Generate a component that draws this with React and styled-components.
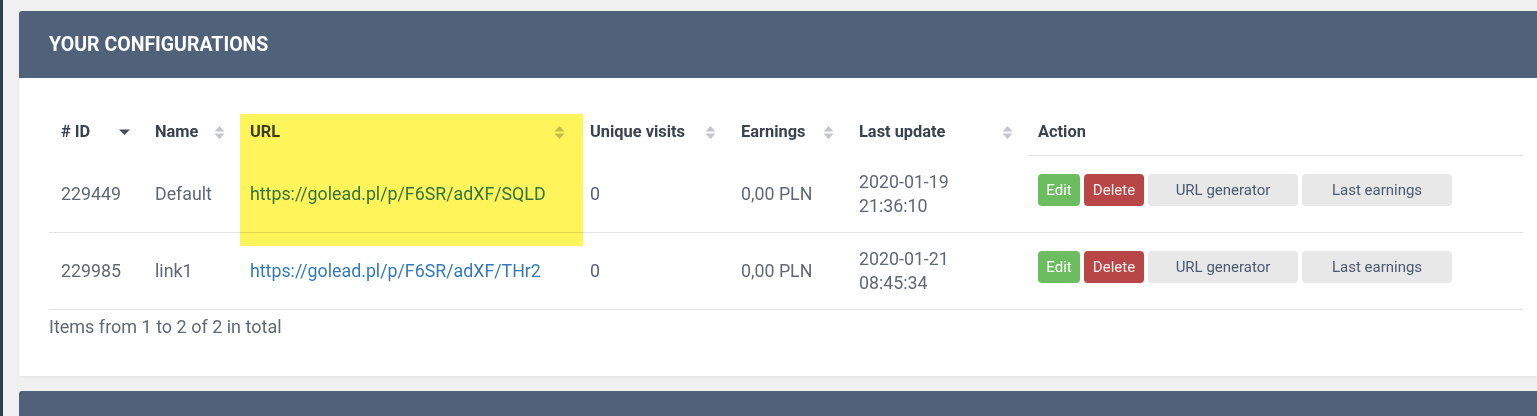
import React from "react";
import styled, { createGlobalStyle } from "styled-components";

const GlobalStyle = createGlobalStyle`
  html, body {
    margin: 0;
    padding: 0;
    background: #f0f0f0;
    font-family: Roboto, "Liberation Sans", Arial, sans-serif;
    overflow: hidden;
  }
`;

const Layout = styled.div`
  display: flex;
  height: 416px;
  overflow: hidden;
`;

const SideStrip = styled.div`
  width: 3px;
  flex-shrink: 0;
  background: #2f3f50;
`;

const Main = styled.div`
  flex: 1;
  min-width: 0;
  padding: 11px 0 0 16px;
  overflow: hidden;
`;

const Panel = styled.div`
  margin-right: -16px;
  background: #fff;
  border-radius: 3px 3px 0 0;
  box-shadow: 0 1px 3px rgba(0, 0, 0, 0.06);
`;

const PanelHead = styled.div`
  height: 67px;
  display: flex;
  align-items: center;
  padding: 0 30px;
  background: #4f6279;
  border-radius: 3px 3px 0 0;
  color: #fff;
  font-size: 19.5px;
  font-weight: 700;
  text-transform: uppercase;
`;

const PanelBody = styled.div`
  padding: 30px 30px 37px;
`;

const TableWrap = styled.div`
  position: relative;
`;

const Table = styled.table`
  width: 100%;
  border-collapse: collapse;
  table-layout: fixed;
  font-size: 17.8px;
  line-height: 24px;
`;

const Th = styled.th`
  text-align: left;
  padding: 12px 0 11px ${(p) => (p.$first ? "12px" : "10px")};
  font-size: 16.4px;
  font-weight: 700;
  color: #3a4250;
  white-space: nowrap;
  border-bottom: 1px solid ${(p) => (p.$lined ? "#e2e2e2" : "transparent")};
`;

const HeadInner = styled.div`
  display: flex;
  align-items: center;
  justify-content: space-between;
  padding-right: 15px;
`;

const Td = styled.td`
  padding: 14px 10px 14px ${(p) => (p.$first ? "12px" : "10px")};
  vertical-align: middle;
  color: ${(p) => p.$color || "#616873"};
  border-bottom: 1px solid #e2e2e2;
  white-space: nowrap;
`;

const UrlLink = styled.a`
  color: #337ab7;
  text-decoration: none;
`;

const Actions = styled.div`
  display: flex;
  gap: 4px;
  margin-bottom: 8px;
`;

const Button = styled.button`
  height: 32px;
  padding: 0;
  width: ${(p) => p.$w}px;
  border: none;
  border-radius: 4px;
  font-family: inherit;
  font-size: 15px;
  background: ${(p) => p.$bg};
  color: ${(p) => p.$fg};
  cursor: pointer;
`;

const Summary = styled.div`
  margin-top: 5px;
  font-size: 18px;
  line-height: 24px;
  color: #616873;
`;

const Highlight = styled.div`
  position: absolute;
  left: 191px;
  top: 6px;
  width: 343px;
  height: 132px;
  background: #fff45a;
  mix-blend-mode: multiply;
  pointer-events: none;
`;

const BottomRow = styled.div`
  display: flex;
  gap: 16px;
  margin-top: 15px;
  margin-right: -40px;
`;

const BottomPanel = styled.div`
  flex: ${(p) => p.$grow};
  height: 60px;
  background: #4f6279;
  border-radius: 3px 3px 0 0;
`;

const SortIcon = ({ active }) =>
  active ? (
    <svg width="11" height="12" viewBox="0 0 11 12">
      <path d="M0 3.5h11L5.5 9z" fill="#4a4f58" />
    </svg>
  ) : (
    <svg width="11" height="15" viewBox="0 0 11 15">
      <path d="M5.5 1l5 5.5h-10z" fill="#c4c6cc" />
      <path d="M5.5 14l5-5.5h-10z" fill="#c4c6cc" />
    </svg>
  );

const columns = [
  { label: "# ID", width: 96, active: true },
  { label: "Name", width: 95 },
  { label: "URL", width: 340 },
  { label: "Unique visits", width: 151 },
  { label: "Earnings", width: 118 },
  { label: "Last update", width: 179 },
  { label: "Action", noSort: true },
];

const rows = [
  {
    id: "229449",
    name: "Default",
    url: "https://golead.pl/p/F6SR/adXF/SQLD",
    visits: "0",
    earnings: "0,00 PLN",
    date: "2020-01-19",
    time: "21:36:10",
  },
  {
    id: "229985",
    name: "link1",
    url: "https://golead.pl/p/F6SR/adXF/THr2",
    visits: "0",
    earnings: "0,00 PLN",
    date: "2020-01-21",
    time: "08:45:34",
  },
];

const App = () => {
  return (
    <Layout>
      <GlobalStyle />
      <SideStrip />
      <Main>
        <Panel>
          <PanelHead>Your configurations</PanelHead>
          <PanelBody>
            <TableWrap>
              <Table>
                <colgroup>
                  {columns.map((c) => (
                    <col key={c.label} style={c.width ? { width: c.width } : undefined} />
                  ))}
                </colgroup>
                <thead>
                  <tr>
                    {columns.map((c, i) => (
                      <Th key={c.label} $first={i === 0} $lined={c.noSort}>
                        <HeadInner>
                          <span>{c.label}</span>
                          {!c.noSort && <SortIcon active={c.active} />}
                        </HeadInner>
                      </Th>
                    ))}
                  </tr>
                </thead>
                <tbody>
                  {rows.map((r) => (
                    <tr key={r.id}>
                      <Td $first>{r.id}</Td>
                      <Td>{r.name}</Td>
                      <Td>
                        <UrlLink href="#">{r.url}</UrlLink>
                      </Td>
                      <Td $color="#556378">{r.visits}</Td>
                      <Td>{r.earnings}</Td>
                      <Td>
                        {r.date}
                        <br />
                        {r.time}
                      </Td>
                      <Td>
                        <Actions>
                          <Button $w={42} $bg="#6bbd5f" $fg="#fff">Edit</Button>
                          <Button $w={60} $bg="#b84646" $fg="#fdeeee">Delete</Button>
                          <Button $w={150} $bg="#e8e8e8" $fg="#4a5a72">URL generator</Button>
                          <Button $w={150} $bg="#e8e8e8" $fg="#4a5a72">Last earnings</Button>
                        </Actions>
                      </Td>
                    </tr>
                  ))}
                </tbody>
              </Table>
              <Highlight />
            </TableWrap>
            <Summary>Items from 1 to 2 of 2 in total</Summary>
          </PanelBody>
        </Panel>
        <BottomRow>
          <BottomPanel $grow="759 0 759px" />
          <BottomPanel $grow="1" />
        </BottomRow>
      </Main>
    </Layout>
  );
};

export default App;
